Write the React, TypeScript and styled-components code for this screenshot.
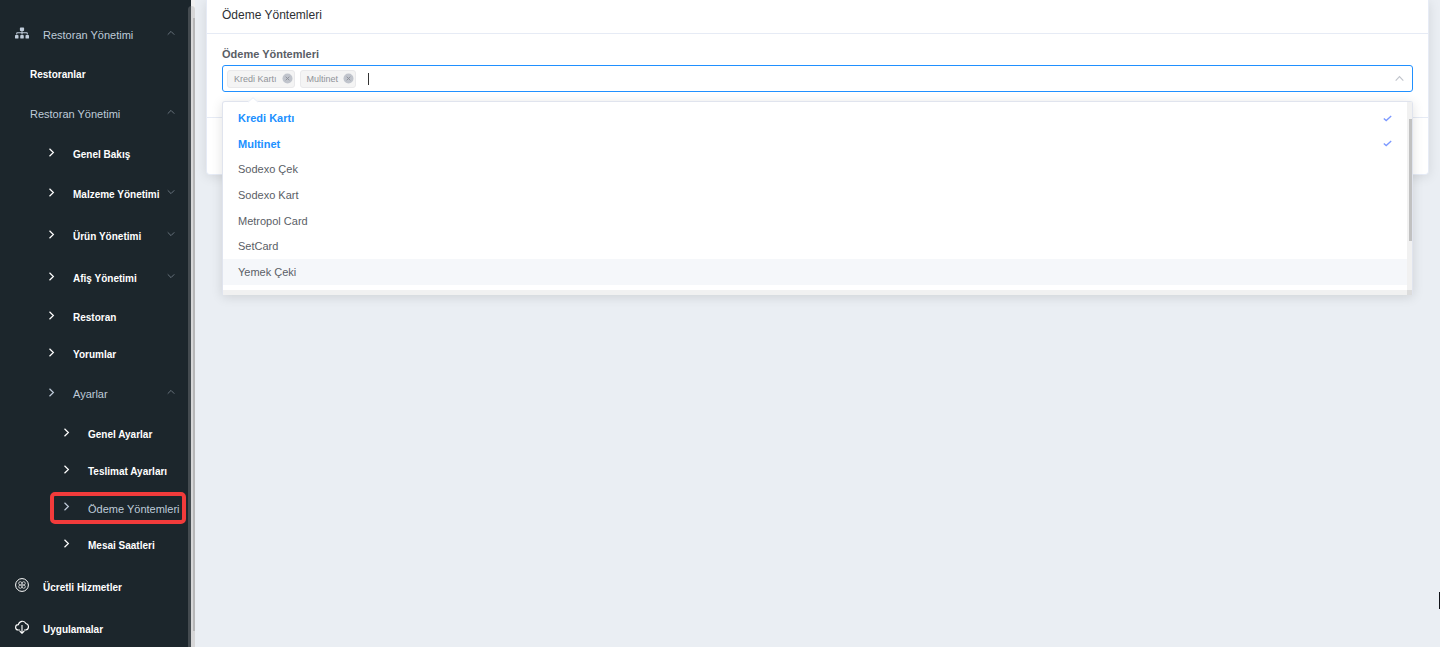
import React from "react";
import styled, { createGlobalStyle, css } from "styled-components";
import { FaSitemap } from "react-icons/fa";

const GlobalStyle = createGlobalStyle`
  * { box-sizing: border-box; }
  body {
    margin: 0;
    background: #eaeef3;
    font-family: "Liberation Sans", Arial, sans-serif;
    font-size: 11px;
    color: #5a5e66;
  }
`;

const Page = styled.div`
  display: flex;
  height: 100vh;
  overflow: hidden;
`;

const Sidebar = styled.aside`
  position: relative;
  display: flex;
  flex: 0 0 195px;
  overflow: hidden;
`;

const Nav = styled.nav`
  flex: 1;
  padding-top: 14px;
  background: #1c262c;
`;

const Rail = styled.div`
  width: 4px;
  padding: 18px 0 16px 2px;
  background: #f0f0f0;
`;

const RailThumb = styled.div`
  height: 100%;
  background: #c1c1c1;
`;

const ScrollOverlay = styled.div`
  position: absolute;
  top: 6px;
  right: 0;
  bottom: 0;
  width: 7px;
  border-radius: 4px 4px 0 0;
  background: rgba(157, 157, 160, 0.31);
`;

const List = styled.ul<{ $level: number }>`
  margin: 0;
  padding: ${(p) => (p.$level > 1 ? 1 : 0)}px 0;
  list-style: none;
`;

type RowProps = { $level: number; $muted?: boolean; $height: number };

const rowStyle = css<RowProps>`
  position: relative;
  display: flex;
  align-items: center;
  width: 100%;
  height: ${(p) => p.$height}px;
  padding: 0 20px 0 ${(p) => [15, 30, 48, 63][p.$level]}px;
  border: 0;
  background: none;
  color: ${(p) => (p.$muted ? "#bfcbd9" : "#ffffff")};
  font-family: inherit;
  font-size: ${(p) => (p.$muted ? 11 : 10)}px;
  font-weight: ${(p) => (p.$muted ? 400 : 700)};
  text-align: left;
  text-decoration: none;
  white-space: nowrap;
`;

const NavLink = styled.a<RowProps & { $framed?: boolean }>`
  ${rowStyle}
  ${(p) =>
    p.$framed &&
    css`
      padding-right: 0;
      &::after {
        content: "";
        position: absolute;
        inset: 2px 5px 3px 50px;
        border: 4px solid #f23b3b;
        border-radius: 5px;
      }
    `}
`;

const NavToggle = styled.button<RowProps>`
  ${rowStyle}
`;

const IconSlot = styled.span<{ $width: number }>`
  display: flex;
  flex: none;
  width: ${(p) => p.$width}px;
  padding-bottom: 4px;
`;

const ArrowSlot = styled.span`
  position: absolute;
  right: 16px;
  display: flex;
  padding-bottom: 4px;
  color: #6f7b84;
`;

const Content = styled.main`
  flex: 1;
  min-width: 0;
  padding: 0 11px;
`;

const Card = styled.section`
  border: 1px solid #e6ebf5;
  border-top: 0;
  border-radius: 0 0 4px 4px;
  background: #fff;
  box-shadow: 0 2px 12px rgba(0, 0, 0, 0.1);
`;

const CardHeader = styled.h1`
  height: 34px;
  margin: 0;
  padding: 0 15px;
  border-bottom: 1px solid #e6ebf5;
  color: #2d2f33;
  font-size: 12px;
  font-weight: 400;
  line-height: 30px;
`;

const CardBody = styled.div`
  padding: 12px 15px 25px;
`;

const CardFooter = styled.div`
  height: 57px;
  border-top: 1px solid #e6ebf5;
`;

const FieldLabel = styled.label`
  display: block;
  height: 19px;
  font-weight: 700;
  line-height: 17px;
`;

const Select = styled.div`
  position: relative;
`;

const SelectBox = styled.div`
  display: flex;
  align-items: center;
  gap: 5px;
  height: 27px;
  padding: 0 8px 0 4px;
  border: 1px solid #2090ff;
  border-radius: 3px;
  background: #fff;
`;

const Tag = styled.span`
  display: flex;
  align-items: center;
  gap: 5px;
  height: 18px;
  padding: 0 1px 0 6px;
  border: 1px solid #e9e9eb;
  border-radius: 3px;
  background: #f4f4f4;
  color: #909399;
  font-size: 9px;
`;

const TagClose = styled.button`
  display: flex;
  padding: 0;
  border: 0;
  background: none;
`;

const Caret = styled.span`
  width: 1px;
  height: 12px;
  margin-left: 7px;
  background: #333;
`;

const SearchInput = styled.input`
  flex: 1;
  min-width: 0;
  padding: 0;
  border: 0;
  outline: 0;
  background: none;
  font: inherit;
`;

const Dropdown = styled.div`
  position: absolute;
  top: 36px;
  left: 0;
  right: 0;
  display: grid;
  grid-template-columns: 1fr 5px;
  grid-template-rows: 1fr 5px;
  border: 1px solid #e0e4ee;
  border-bottom: 0;
  border-radius: 3px 3px 0 0;
  background: #fff;
  box-shadow: 0 2px 12px rgba(0, 0, 0, 0.12);
`;

const Pointer = styled.svg`
  position: absolute;
  top: -5px;
  left: 24px;
`;

const Options = styled.ul`
  display: grid;
  grid-auto-rows: 1fr;
  height: 188px;
  margin: 0;
  padding: 4px 0 5px;
  list-style: none;
`;

const Option = styled.li<{ $selected?: boolean; $hover?: boolean }>`
  display: flex;
  align-items: center;
  justify-content: space-between;
  padding: 0 15px 1px;
  background: ${(p) => (p.$hover ? "#f5f7fa" : "transparent")};
  color: ${(p) => (p.$selected ? "#2090ff" : "#5a5e66")};
  font-weight: ${(p) => (p.$selected ? 700 : 400)};
`;

const VTrack = styled.div`
  padding: 17px 0 0 2px;
  background: #f1f1f1;
`;

const VThumb = styled.div`
  height: 122px;
  background: #c1c1c1;
`;

const HTrack = styled.div`
  background: #f1f1f1;
`;

const Corner = styled.div`
  background: #dcdcdc;
`;

const EdgeMark = styled.div`
  position: fixed;
  top: 592px;
  right: 0;
  width: 1px;
  height: 17px;
  background: #111318;
`;

const ChevronRight = () => (
  <svg width="7" height="9" viewBox="0 0 7 9" fill="none" stroke="currentColor" strokeWidth="1.2">
    <path d="M1.5 0.7 5.4 4.5 1.5 8.3" />
  </svg>
);

const Arrow = ({ up }: { up?: boolean }) => (
  <svg width="8" height="8" viewBox="0 0 8 8" fill="none" stroke="currentColor" strokeWidth="0.9">
    <path d={up ? "M0.7 5.7 4 2.4 7.3 5.7" : "M0.7 2.3 4 5.6 7.3 2.3"} />
  </svg>
);

const ServicesIcon = () => (
  <svg width="14" height="14" viewBox="0 0 14 14" fill="none" stroke="currentColor">
    <circle cx="7" cy="7" r="6.4" />
    <g strokeWidth="0.7">
      <circle cx="5.3" cy="5.3" r="1.6" />
      <circle cx="8.7" cy="5.3" r="1.6" />
      <circle cx="5.3" cy="8.7" r="1.6" />
      <circle cx="8.7" cy="8.7" r="1.6" />
    </g>
  </svg>
);

const CloudIcon = () => (
  <svg width="14" height="14" viewBox="0 0 14 14" fill="none" stroke="currentColor" strokeWidth="1.1">
    <path d="M5 10H3.2A2.7 2.7 0 0 1 3.4 4.6 4 4 0 0 1 10.9 3.5 3.3 3.3 0 0 1 10.6 10H9" />
    <path d="M7 5v8.2M4.7 11 7 13.3 9.3 11" />
  </svg>
);

const Check = () => (
  <svg width="9" height="7" viewBox="0 0 9 7" fill="none" stroke="#7b98ff" strokeWidth="1.3">
    <path d="M0.8 3.4 3.2 5.6 8.2 1" />
  </svg>
);

const CloseIcon = () => (
  <svg width="11" height="11" viewBox="0 0 11 11">
    <circle cx="5.5" cy="5.5" r="5" fill="#c0c4cc" />
    <path d="M3.7 3.7 7.3 7.3M7.3 3.7 3.7 7.3" stroke="#8c9099" strokeWidth="0.9" />
  </svg>
);

type Item = {
  label: string;
  icon?: React.ReactNode;
  arrow?: "up" | "down";
  muted?: boolean;
  framed?: boolean;
  children?: Item[];
};

const menu: Item[] = [
  {
    label: "Restoran Yönetimi",
    icon: <FaSitemap size={14} />,
    arrow: "up",
    muted: true,
    children: [
      { label: "Restoranlar" },
      {
        label: "Restoran Yönetimi",
        arrow: "up",
        muted: true,
        children: [
          { label: "Genel Bakış" },
          { label: "Malzeme Yönetimi", arrow: "down" },
          { label: "Ürün Yönetimi", arrow: "down" },
          { label: "Afiş Yönetimi", arrow: "down" },
          { label: "Restoran" },
          { label: "Yorumlar" },
          {
            label: "Ayarlar",
            arrow: "up",
            muted: true,
            children: [
              { label: "Genel Ayarlar" },
              { label: "Teslimat Ayarları" },
              { label: "Ödeme Yöntemleri", muted: true, framed: true },
              { label: "Mesai Saatleri" },
            ],
          },
        ],
      },
    ],
  },
  { label: "Ücretli Hizmetler", icon: <ServicesIcon /> },
  { label: "Uygulamalar", icon: <CloudIcon /> },
];

const NavItem = ({ item, level }: { item: Item; level: number }) => {
  const inner = (
    <>
      {item.icon && <IconSlot $width={28}>{item.icon}</IconSlot>}
      {level > 1 && (
        <IconSlot $width={25}>
          <ChevronRight />
        </IconSlot>
      )}
      <span>{item.label}</span>
      {item.arrow && (
        <ArrowSlot>
          <Arrow up={item.arrow === "up"} />
        </ArrowSlot>
      )}
    </>
  );
  const row = {
    $level: level,
    $muted: item.muted,
    $height: item.arrow || level === 0 ? 42 : 37,
  };
  return (
    <li>
      {item.arrow ? (
        <NavToggle type="button" aria-expanded={item.arrow === "up"} {...row}>
          {inner}
        </NavToggle>
      ) : (
        <NavLink href="#" $framed={item.framed} {...row}>
          {inner}
        </NavLink>
      )}
      {item.children && <NavList items={item.children} level={level + 1} />}
    </li>
  );
};

const NavList = ({ items, level }: { items: Item[]; level: number }) => (
  <List $level={level}>
    {items.map((item) => (
      <NavItem key={item.label} item={item} level={level} />
    ))}
  </List>
);

const selected = ["Kredi Kartı", "Multinet"];
const options = [
  "Kredi Kartı",
  "Multinet",
  "Sodexo Çek",
  "Sodexo Kart",
  "Metropol Card",
  "SetCard",
  "Yemek Çeki",
];

export default function App() {
  return (
    <Page>
      <GlobalStyle />
      <Sidebar>
        <Nav>
          <NavList items={menu} level={0} />
        </Nav>
        <Rail>
          <RailThumb />
        </Rail>
        <ScrollOverlay />
      </Sidebar>
      <Content>
        <Card>
          <CardHeader>Ödeme Yöntemleri</CardHeader>
          <CardBody>
            <FieldLabel htmlFor="methods">Ödeme Yöntemleri</FieldLabel>
            <Select>
              <SelectBox>
                {selected.map((name) => (
                  <Tag key={name}>
                    {name}
                    <TagClose type="button" aria-label={name}>
                      <CloseIcon />
                    </TagClose>
                  </Tag>
                ))}
                <Caret />
                <SearchInput id="methods" type="text" role="combobox" aria-expanded="true" aria-controls="method-list" />
                <svg width="9" height="9" viewBox="0 0 8 8" fill="none" stroke="#c0c4cc">
                  <path d="M0.6 5.9 4 2.3 7.4 5.9" />
                </svg>
              </SelectBox>
              <Dropdown>
                <Pointer width="12" height="6" viewBox="0 0 12 6">
                  <path d="M0 5.5 6 0.5 12 5.5V6H0Z" fill="#fff" />
                  <path d="M1 5.2 6 0.7 11 5.2" fill="none" stroke="#e6ebf5" />
                </Pointer>
                <Options id="method-list" role="listbox">
                  {options.map((name) => {
                    const on = selected.includes(name);
                    return (
                      <Option key={name} role="option" aria-selected={on} $selected={on} $hover={name === "Yemek Çeki"}>
                        {name}
                        {on && <Check />}
                      </Option>
                    );
                  })}
                </Options>
                <VTrack>
                  <VThumb />
                </VTrack>
                <HTrack />
                <Corner />
              </Dropdown>
            </Select>
          </CardBody>
          <CardFooter />
        </Card>
      </Content>
      <EdgeMark />
    </Page>
  );
}
